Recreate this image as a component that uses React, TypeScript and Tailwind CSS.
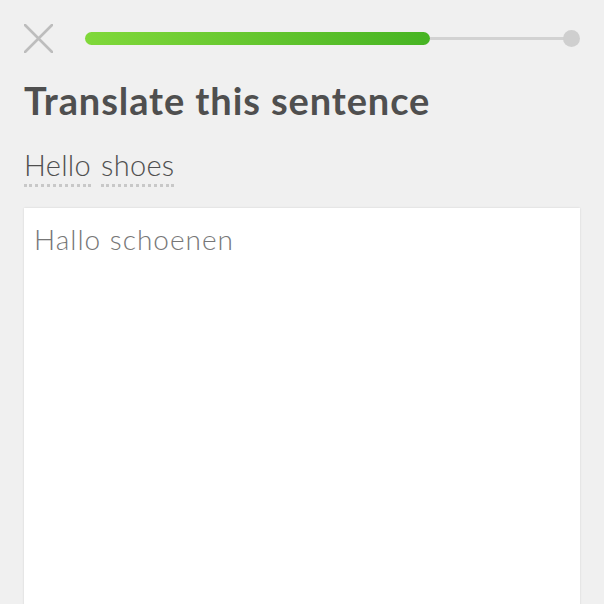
export default function App() {
  return (
    <div className="h-[604px] w-[604px] overflow-hidden bg-[#f0f0f0] font-['Lato',sans-serif]">
      <div className="flex h-[77px] items-center pl-6 pr-6">
        <button className="flex h-[29px] w-[29px] shrink-0 items-center justify-center">
          <svg width="29" height="29" viewBox="0 0 29 29">
            <path d="M1 1 L28 28 M28 1 L1 28" stroke="#bdbdbd" strokeWidth="2.6" strokeLinecap="round" />
          </svg>
        </button>
        <div className="ml-8 flex flex-1 items-center">
          <div className="h-[13px] w-[345px] rounded-full bg-gradient-to-r from-[#80d83a] to-[#46b423]" />
          <div className="h-[3px] flex-1 bg-[#d2d2d2]" />
          <div className="-ml-px h-[17px] w-[17px] rounded-full bg-[#cfcfcf]" />
        </div>
      </div>
      <div className="px-6">
        <h1 className="text-[38px] font-bold leading-[46px] tracking-[0.9px] text-[#4f4f4f]">Translate this sentence</h1>
        <div className="mt-[25px] flex gap-[10px] text-[29px] font-light leading-[34px] tracking-[0.3px] text-[#4f4f4f]">
          <span className="border-b-[3px] border-dotted border-[#c8c8c8] pb-[2px]">Hello</span>
          <span className="border-b-[3px] border-dotted border-[#c8c8c8] pb-[2px]">shoes</span>
        </div>
        <div className="mt-[21px] h-[420px] bg-white px-[10px] pt-[14px] shadow-[0_0_2px_rgba(0,0,0,0.12)]">
          <p className="text-[28px] font-light leading-[34px] tracking-[1px] text-[#777777]">Hallo schoenen</p>
        </div>
      </div>
    </div>
  );
}
